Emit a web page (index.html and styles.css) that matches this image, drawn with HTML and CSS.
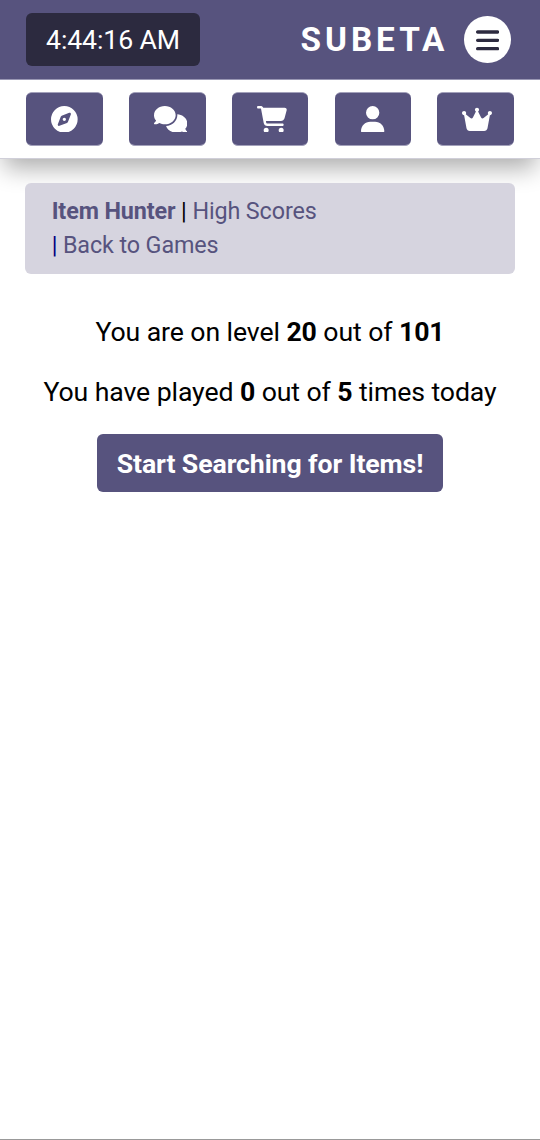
FILE: index.html
```html
<!DOCTYPE html>
<html lang="en">
<head>
<meta charset="utf-8">
<title>Item Hunter</title>
<link rel="stylesheet" href="styles.css">
</head>
<body>
<header class="topbar">
  <div class="clock">4:44:16 AM</div>
  <div class="brand">SUBETA</div>
  <button class="menu" aria-label="Menu"><svg class="menu-icon" viewBox="0 0 448 512"><path d="M0 96C0 78.300 14.300 64 32 64H416c17.700 0 32 14.300 32 32s-14.300 32-32 32H32C14.300 128 0 113.700 0 96zM0 256c0-17.700 14.300-32 32-32H416c17.700 0 32 14.300 32 32s-14.300 32-32 32H32c-17.700 0-32-14.300-32-32zM448 416c0 17.700-14.300 32-32 32H32c-17.700 0-32-14.300-32-32s14.300-32 32-32H416c17.700 0 32 14.300 32 32z"/></svg></button>
</header>
<nav class="quicknav">
  <a class="quick"><span class="slot"><svg class="icon" viewBox="0 0 512 512"><path d="M256 512A256 256 0 1 0 256 0a256 256 0 1 0 0 512zm50.700-186.900L162.400 380.600c-19.400 7.500-38.500-11.600-31-31l55.500-144.300c3.300-8.500 9.900-15.100 18.400-18.400l144.300-55.500c19.400-7.500 38.500 11.600 31 31L325.100 306.700c-3.200 8.500-9.900 15.100-18.400 18.400zM288 256a32 32 0 1 0 -64 0 32 32 0 1 0 64 0z"/></svg></span></a>
  <a class="quick"><span class="slot"><svg class="icon widest" viewBox="0 0 640 512"><path d="M208 352c114.900 0 208-78.800 208-176S322.900 0 208 0S0 78.800 0 176c0 38.600 14.700 74.300 39.600 103.400c-3.500 9.400-8.700 17.700-14.200 24.700c-4.800 6.200-9.700 11-13.300 14.300c-1.800 1.600-3.300 2.900-4.300 3.700c-.5 .4-.9 .7-1.100 .8l-.2 .2C1 327.200-1.400 334.400 .8 340.900S9.100 352 16 352c21.800 0 43.800-5.600 62.100-12.500c9.200-3.500 17.800-7.400 25.300-11.400C134.100 343.300 169.800 352 208 352zM448 176c0 112.300-99.100 196.900-216.500 207C255.800 457.400 336.400 512 432 512c38.200 0 73.900-8.700 104.700-23.900c7.500 4 16 7.900 25.200 11.400c18.300 6.900 40.300 12.500 62.100 12.500c6.900 0 13.100-4.500 15.200-11.100c2.100-6.600-.2-13.800-5.800-17.900l-.2-.2c-.2-.2-.6-.4-1.100-.8c-1-.8-2.500-2-4.300-3.700c-3.600-3.300-8.500-8.100-13.300-14.300c-5.500-7-10.700-15.400-14.200-24.700c24.900-29 39.600-64.700 39.600-103.400c0-92.800-84.900-168.900-192.600-175.500c.4 5.100 .6 10.300 .6 15.500z"/></svg></span></a>
  <a class="quick"><span class="slot"><svg class="icon wide" viewBox="0 0 576 512"><path d="M0 24C0 10.700 10.700 0 24 0H69.500c22 0 41.500 12.800 50.600 32h411c26.300 0 45.500 25 38.600 50.400l-41 152.300c-8.500 31.400-37 53.300-69.500 53.300H170.700l5.400 28.500c2.200 11.300 12.100 19.500 23.600 19.500H488c13.300 0 24 10.700 24 24s-10.700 24-24 24H199.700c-34.600 0-64.300-24.600-70.700-58.500L77.400 54.500c-.7-3.800-4-6.500-7.900-6.500H24C10.700 48 0 37.300 0 24zM128 464a48 48 0 1 1 96 0 48 48 0 1 1 -96 0zm336-48a48 48 0 1 1 0 96 48 48 0 1 1 0-96z"/></svg></span></a>
  <a class="quick"><span class="slot"><svg class="icon narrow" viewBox="0 0 448 512"><path d="M224 256A128 128 0 1 0 224 0a128 128 0 1 0 0 256zm-45.700 48C79.800 304 0 383.800 0 482.300C0 498.700 13.300 512 29.700 512H418.300c16.400 0 29.700-13.300 29.700-29.700C448 383.800 368.200 304 269.700 304H178.300z"/></svg></span></a>
  <a class="quick"><span class="slot"><svg class="icon wide" viewBox="0 0 576 512"><path d="M309 106c11.400-7 19-19.700 19-34c0-22.100-17.900-40-40-40s-40 17.900-40 40c0 14.400 7.600 27 19 34L209.700 220.600c-9.100 18.200-32.700 23.400-48.600 10.700L72 160c5-6.700 8-15 8-24c0-22.100-17.900-40-40-40S0 113.900 0 136s17.900 40 40 40c.2 0 .5 0 .7 0L86.400 427.400c5.500 30.400 32 52.600 63 52.600H426.600c30.900 0 57.400-22.100 63-52.600L535.300 176c.2 0 .5 0 .7 0c22.100 0 40-17.900 40-40s-17.900-40-40-40s-40 17.900-40 40c0 9 3 17.300 8 24l-89.100 71.300c-15.900 12.700-39.500 7.500-48.600-10.700L309 106z"/></svg></span></a>
</nav>
<main class="content">
  <div class="crumbs">
    <div><a class="link current">Item Hunter</a> | <a class="link">High Scores</a></div>
    <div><span class="navy">|</span> <a class="link">Back to Games</a></div>
  </div>
  <p class="line">You are on level <b>20</b> out of <b>101</b></p>
  <p class="line">You have played <b>0</b> out of <b>5</b> times today</p>
  <button class="start">Start Searching for Items!</button>
</main>
</body>
</html>
```
FILE: styles.css
```css
* { box-sizing: border-box; }
body {
  margin: 0;
  height: 1140px;
  display: flex;
  flex-direction: column;
  background: #fff;
  border-bottom: 1px solid #999;
  font-family: Roboto, sans-serif;
  font-size: 26.67px;
  color: #000;
}
button { border: 0; padding: 0; font: inherit; }
.topbar {
  flex: none;
  position: relative;
  z-index: 1;
  display: flex;
  align-items: center;
  height: 80px;
  padding: 0 29px 0 26px;
  border-bottom: 1px solid #9997b4;
  background: #57537e;
  color: #fff;
}
.clock {
  width: 174px;
  height: 53px;
  border-radius: 6px;
  background: #2c2a3f;
  line-height: 54px;
  letter-spacing: -.13px;
  text-align: center;
}
.brand {
  margin-left: auto;
  font-size: 33.33px;
  font-weight: 700;
  letter-spacing: 3.95px;
}
.menu {
  display: flex;
  align-items: center;
  justify-content: center;
  width: 46.67px;
  height: 46.67px;
  margin-left: 16px;
  padding-top: 1px;
  border-radius: 50%;
  background: #fff;
}
.menu-icon { width: 23.33px; height: 26.67px; fill: #2c2a3f; }
.quicknav {
  flex: none;
  display: flex;
  justify-content: space-between;
  height: 78px;
  padding: 12px 26px 0 26.33px;
  background: #fff;
  box-shadow: 0 1px 0 #d0cfd9, 0 14px 24px -4px rgba(0, 0, 0, .33);
}
.quick {
  display: flex;
  align-items: center;
  justify-content: center;
  width: 76.5px;
  height: 54px;
  border-radius: 6px;
  border: solid #a3a1bb;
  border-width: 1px 0;
  background: #57537e;
}
.slot { display: flex; justify-content: safe center; width: 26.67px; }
.icon { flex: none; width: 26.67px; height: 26.67px; fill: #fff; }
.widest { width: 33.33px; }
.wide { width: 30px; }
.narrow { width: 23.33px; }
.content {
  display: flex;
  flex-direction: column;
  align-items: center;
  padding: 25px 25px 0;
  position: relative;
}
.crumbs {
  align-self: stretch;
  height: 91px;
  margin-bottom: 38px;
  padding: 11px 26.67px;
  border-radius: 6px;
  background: #d6d4df;
  font-size: 23.33px;
  line-height: 34px;
  letter-spacing: -.11px;
}
.link { color: #57537e; }
.current { font-weight: 700; }
.navy { color: #000080; }
.line {
  margin: 0 0 20px;
  line-height: 40px;
  letter-spacing: -.1px;
  white-space: nowrap;
}
.start {
  width: 346px;
  height: 58px;
  margin-top: 2px;
  padding-top: 2px;
  border-radius: 6px;
  background: #57537e;
  color: #fff;
  font-weight: 700;
  letter-spacing: -.1px;
}
```
